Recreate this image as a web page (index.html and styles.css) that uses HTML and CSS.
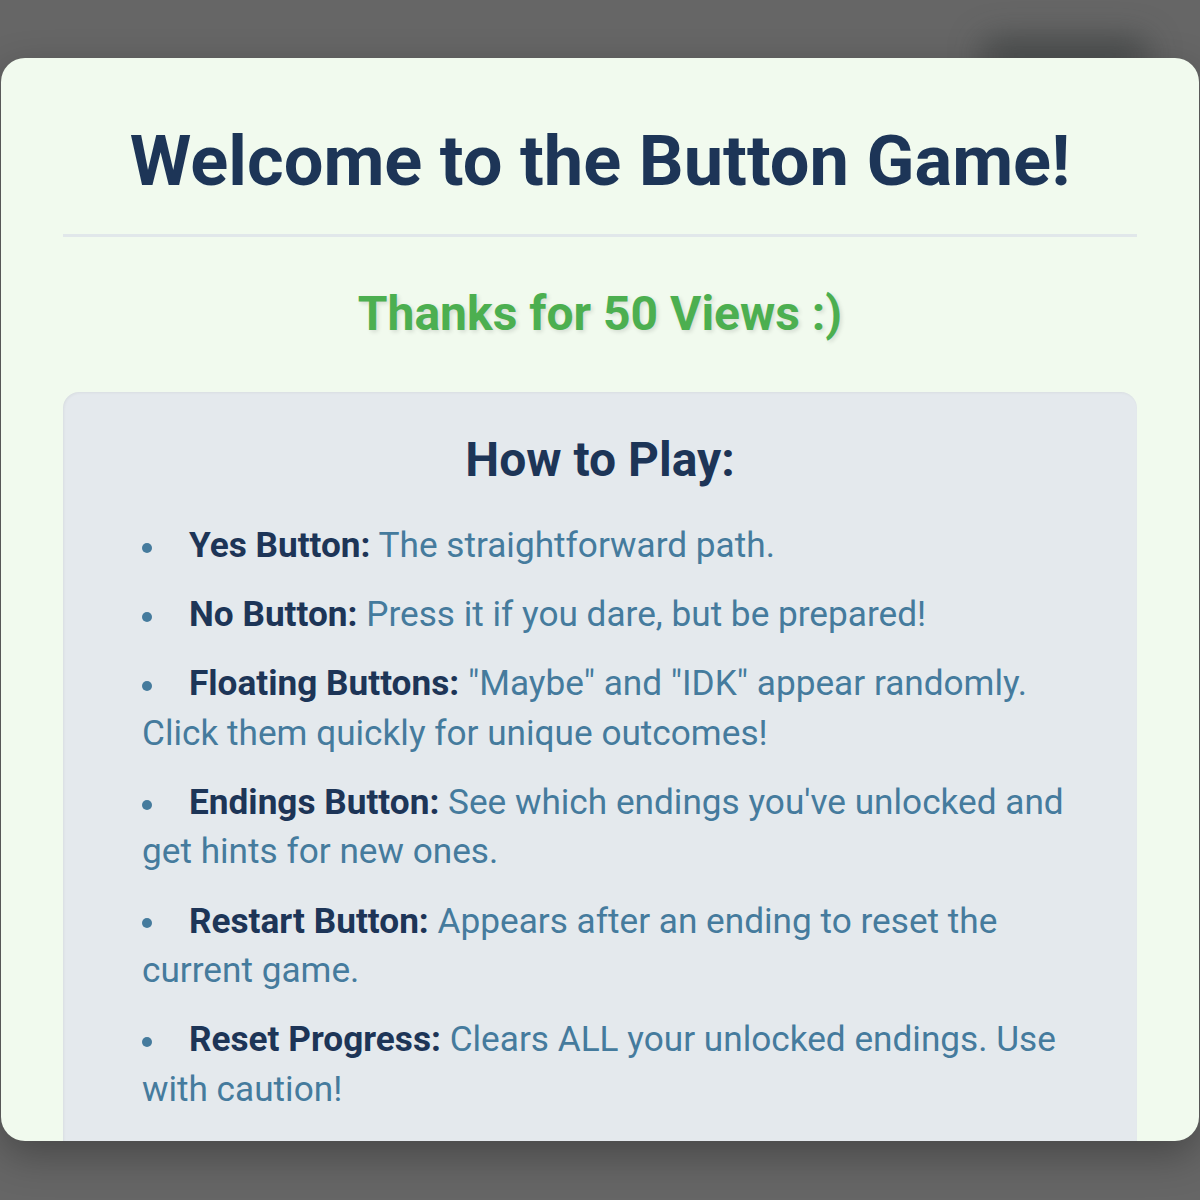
FILE: index.html
```html
<!DOCTYPE html>
<html lang="en">
<head>
<meta charset="utf-8">
<title>Button Game</title>
<link rel="stylesheet" href="styles.css">
</head>
<body>
<div class="backdrop-blob"></div>
<div class="modal">
  <h1 class="title">Welcome to the Button Game!</h1>
  <div class="divider"></div>
  <h2 class="thanks">Thanks for 50 Views :)</h2>
  <div class="howto">
    <h3 class="howto-title">How to Play:</h3>
    <ul class="rules">
      <li><strong>Yes Button:</strong> The straightforward path.</li>
      <li><strong>No Button:</strong> Press it if you dare, but be prepared!</li>
      <li><strong>Floating Buttons:</strong> "Maybe" and "IDK" appear randomly. Click them quickly for unique outcomes!</li>
      <li><strong>Endings Button:</strong> See which endings you've unlocked and get hints for new ones.</li>
      <li><strong>Restart Button:</strong> Appears after an ending to reset the current game.</li>
      <li><strong>Reset Progress:</strong> Clears ALL your unlocked endings. Use with caution!</li>
    </ul>
  </div>
</div>
</body>
</html>
```
FILE: styles.css
```css
html, body {
  margin: 0;
  padding: 0;
  height: 100%;
}
body {
  background: #666666;
  font-family: Roboto, "Liberation Sans", Arial, sans-serif;
  overflow: hidden;
  position: relative;
  padding-top: 58px;
  box-sizing: border-box;
}
.backdrop-blob {
  position: absolute;
  left: 980px;
  top: 38px;
  width: 170px;
  height: 34px;
  background: rgba(40, 45, 45, 0.5);
  filter: blur(16px);
  border-radius: 20px;
}
.modal {
  position: relative;
  margin: 0 1px;
  height: 1083px;
  box-sizing: border-box;
  background: #f1faee;
  border-radius: 24px;
  overflow: hidden;
  padding: 61px 62px 0;
  box-shadow: 0 14px 40px rgba(0, 0, 0, 0.3);
}
.title {
  margin: 0;
  font-size: 70.4px;
  line-height: 85px;
  font-weight: 700;
  color: #1d3557;
  text-align: center;
}
.divider {
  height: 3px;
  background: #e1e7ea;
  margin-top: 30px;
}
.thanks {
  margin: 48px 0 0;
  font-size: 48px;
  line-height: 1.2;
  font-weight: 700;
  color: #4caf50;
  text-align: center;
  text-shadow: 2px 2px 4px rgba(0, 0, 0, 0.12);
}
.howto {
  margin-top: 49px;
  background: #e4e9ed;
  border-radius: 16px;
  padding: 39px 40px 40px 79px;
  box-shadow: inset 1px 1px 3px rgba(0, 0, 0, 0.05);
}
.howto-title {
  margin: 0 0 33px -39px;
  font-size: 48px;
  line-height: 1.2;
  font-weight: 700;
  color: #1d3557;
  text-align: center;
}
.rules {
  list-style: none;
  margin: 0;
  padding: 0;
}
.rules li {
  font-size: 35.2px;
  line-height: 49.5px;
  color: #457b9d;
  margin-bottom: 19.6px;
}
.rules li::before {
  content: "";
  display: inline-block;
  width: 10px;
  height: 10px;
  border-radius: 50%;
  background: #457b9d;
  vertical-align: middle;
  margin: 0 37px 0 0;
}
.rules strong {
  color: #1d3557;
  font-weight: 700;
}
```
